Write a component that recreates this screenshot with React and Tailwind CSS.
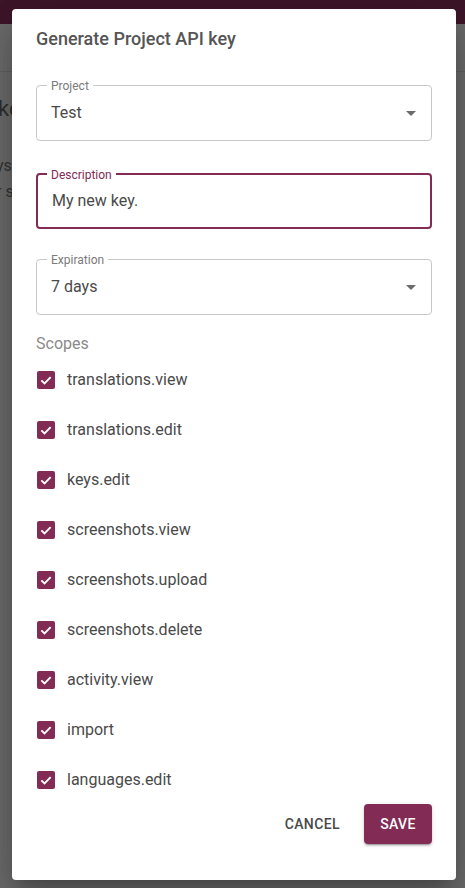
import { useState } from 'react';

const SCOPES = [
  'translations.view',
  'translations.edit',
  'keys.edit',
  'screenshots.view',
  'screenshots.upload',
  'screenshots.delete',
  'activity.view',
  'import',
  'languages.edit',
];

function Arrow() {
  return (
    <svg width="10" height="5" viewBox="0 0 10 5" className="fill-[#6b6b6b]">
      <path d="M0 0 L10 0 L5 5 Z" />
    </svg>
  );
}

function Field({ label, value, focused, select, className }) {
  return (
    <div
      className={`relative h-[56px] rounded-[4px] flex items-center justify-between pl-[14px] pr-[15px] ${
        focused ? 'border-2 border-[#822b55]' : 'border border-[#c8c8c8]'
      } ${className}`}
    >
      <span
        className={`absolute top-0 -translate-y-1/2 bg-white px-[4px] text-[12px] leading-none ${
          focused ? 'left-[9px] text-[#822b55]' : 'left-[10px] text-[#7a7a7a]'
        }`}
      >
        {label}
      </span>
      <span className="text-[16px] text-[#4a4a4a]">{value}</span>
      {select && <Arrow />}
    </div>
  );
}

function Check({ label }) {
  const [on, setOn] = useState(true);
  return (
    <label className="flex items-center h-[50px] cursor-pointer" onClick={() => setOn(!on)}>
      <span
        className={`w-[18px] h-[18px] ml-[1px] rounded-[2px] flex items-center justify-center ${
          on ? 'bg-[#822b55]' : 'border-2 border-[#777]'
        }`}
      >
        {on && (
          <svg width="14" height="14" viewBox="0 0 24 24" fill="none" stroke="white" strokeWidth="3.2">
            <path d="M4 12.5 L9.5 18 L20 7" />
          </svg>
        )}
      </span>
      <span className="ml-[12px] text-[16px] text-[#4a4a4a]">{label}</span>
    </label>
  );
}

export default function App() {
  return (
    <div
      className="relative w-[465px] h-[888px] overflow-hidden bg-[#6c6c6c]"
      style={{ fontFamily: 'Roboto, "Liberation Sans", sans-serif' }}
    >
      {/* page behind the backdrop */}
      <div className="h-[24px] bg-[#3e1529]" />
      <div className="h-[48px] border-b border-[#616161]" />
      <div className="pl-0 pt-[20px] text-[22px] text-[#2f2f2f] -ml-[2px]">ke</div>
      <div className="flex justify-between pt-[28px] text-[16px] leading-[26px] text-[#333]">
        <div className="-ml-[4px]">
          <div>ys</div>
          <div>r s</div>
        </div>
        <div className="mr-[15px]">
          <div>te</div>
          <div>ar</div>
        </div>
      </div>

      {/* dialog */}
      <div className="absolute left-[12px] top-[9px] w-[444px] h-[871px] bg-white rounded-[4px] shadow-[0_11px_15px_-7px_rgba(0,0,0,0.2),0_24px_38px_3px_rgba(0,0,0,0.14),0_9px_46px_8px_rgba(0,0,0,0.12)] px-[24px] flex flex-col">
        <h2 className="pt-[18px] text-[18px] leading-[24px] font-medium text-[#555]">
          Generate Project API key
        </h2>
        <Field label="Project" value="Test" select className="mt-[34px]" />
        <Field label="Description" value="My new key." focused className="mt-[32px]" />
        <Field label="Expiration" value="7 days" select className="mt-[30px]" />
        <div className="mt-[17px] text-[16px] leading-[24px] text-[#8a8a8a]">Scopes</div>
        <div className="-mt-[1px] flex flex-col">
          {SCOPES.map(s => (
            <Check key={s} label={s} />
          ))}
        </div>
        <div className="-mt-[1px] flex justify-end items-center gap-[16px]">
          <button className="h-[40px] px-[8px] text-[14px] font-medium tracking-[0.4px] text-[#4a4a4a]">
            CANCEL
          </button>
          <button className="h-[40px] w-[68px] rounded-[4px] bg-[#822b55] text-white text-[14px] font-medium tracking-[0.4px] shadow-[0_3px_1px_-2px_rgba(0,0,0,0.2),0_2px_2px_0_rgba(0,0,0,0.14),0_1px_5px_0_rgba(0,0,0,0.12)]">
            SAVE
          </button>
        </div>
      </div>
    </div>
  );
}
